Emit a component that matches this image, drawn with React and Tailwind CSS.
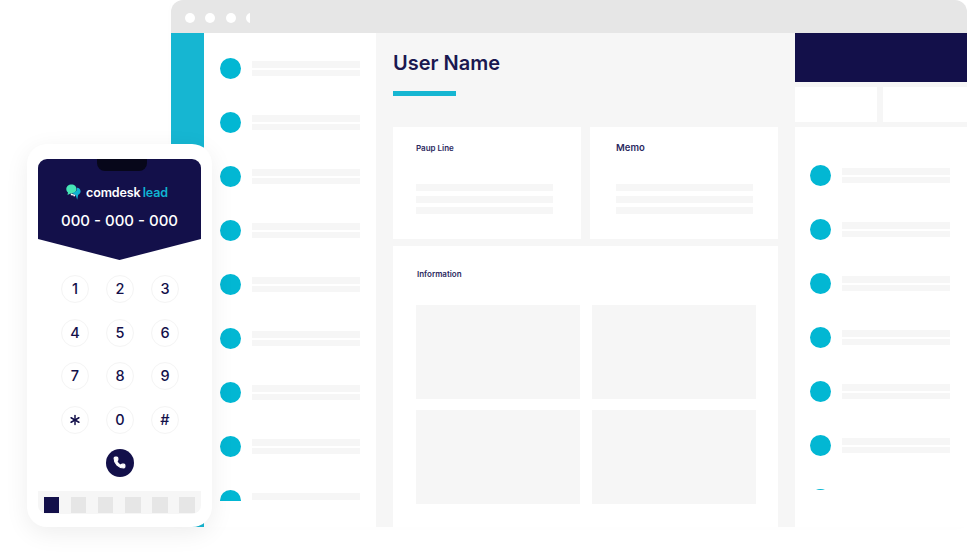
import React from "react";
import { Asterisk, Phone } from "lucide-react";

const KEYS = ["1", "2", "3", "4", "5", "6", "7", "8", "9", "*", "0", "#"];
const LEFT_ROWS = [0, 1, 2, 3, 4, 5, 6, 7, 8];
const RIGHT_ROWS = [0, 1, 2, 3, 4, 5, 6];

function ContactRow() {
  return (
    <div className="h-[54px] shrink-0 flex items-start gap-[11px]">
      <div className="w-[21px] h-[21px] rounded-full bg-[#02b7d3] shrink-0" />
      <div className="w-[108px] pt-[3px] flex flex-col gap-[2px]">
        <div className="h-[6.5px] bg-[#f6f6f6]" />
        <div className="h-[6px] bg-[#f6f6f6]" />
      </div>
    </div>
  );
}

function TextLines() {
  return (
    <div className="w-[137px] flex flex-col gap-[4.5px]">
      <div className="h-[7px] bg-[#f6f6f6]" />
      <div className="h-[7px] bg-[#f6f6f6]" />
      <div className="h-[7px] bg-[#f6f6f6]" />
    </div>
  );
}

function Logo() {
  return (
    <svg width="15" height="17" viewBox="0 0 15 17" className="shrink-0">
      <path d="M5.5 0.5C8.5 0.5 10.5 2.6 10.5 5C10.5 7.6 8.4 9.5 5.5 9.5C5.2 9.5 4.9 9.5 4.6 9.4L1.5 11L2 8.4C0.9 7.6 0.3 6.4 0.3 5C0.3 2.6 2.5 0.5 5.5 0.5Z" fill="#46e5b5" />
      <path d="M11 3.7C13 3.7 14.6 5.3 14.6 7.3C14.6 8.9 13.6 10.2 12.2 10.7L11.2 15.8L9.7 11.2C8 10.8 6.8 9.4 6.8 8.6C9 8.6 11.4 6.8 11 3.7Z" fill="#10b4d3" />
      <path d="M4.8 9.5L9.5 11L8 13L7.5 11.6L4.8 11.2Z" fill="#ffffff" />
    </svg>
  );
}

function PhoneMock() {
  return (
    <div className="absolute left-[27px] top-[144px] w-[185px] h-[383px] bg-white rounded-[20px] shadow-[0_6px_24px_rgba(0,0,0,0.07)] px-[11px] pt-[15px] flex flex-col">
      <div className="relative h-[101px] bg-[#13104a] rounded-t-[9px] [clip-path:polygon(0_0,100%_0,100%_80px,50%_100%,0_80px)] flex flex-col items-center">
        <div className="absolute top-0 left-[59px] w-[50px] h-[12px] bg-[#07071a] rounded-b-[8px]" />
        <div className="mt-[25px] flex items-center gap-[5px] -ml-[5px]">
          <Logo />
          <div className="text-[12.5px] leading-[16px] font-semibold tracking-[-0.1px] text-white">
            comdesk<span className="text-[#10b4d3] ml-[2px]">lead</span>
          </div>
        </div>
        <div className="mt-[10px] text-[15px] leading-[20px] font-medium text-white whitespace-nowrap">000 - 000 - 000</div>
      </div>

      <div className="mt-[15px] px-[23px] grid grid-cols-[28px_28px_28px] gap-x-[17px] gap-y-[15.6px]">
        {KEYS.map((key) => (
          <div key={key} className="w-[28px] h-[28px] rounded-full border border-[#f4f4f4] flex items-center justify-center text-[14.5px] font-medium text-[#13104a]">
            {key === "*" ? <Asterisk size={18} strokeWidth={2} aria-label="*" /> : key}
          </div>
        ))}
      </div>

      <div className="mt-[15px] self-center w-[28px] h-[28px] rounded-full bg-[#13104a] flex items-center justify-center">
        <Phone size={13} strokeWidth={2} className="text-white fill-white" />
      </div>

      <div className="mt-[14px] h-[23.5px] bg-[#f6f6f6] rounded-b-[9px] pl-[6px] pr-[6px] pt-[6px] flex justify-between">
        <div className="w-[15px] h-[16px] bg-[#13104a]" />
        <div className="w-[15.5px] h-[16px] bg-[#e6e6e6]" />
        <div className="w-[15.5px] h-[16px] bg-[#e6e6e6]" />
        <div className="w-[15.5px] h-[16px] bg-[#e6e6e6]" />
        <div className="w-[15.5px] h-[16px] bg-[#e6e6e6]" />
        <div className="w-[15.5px] h-[16px] bg-[#e6e6e6]" />
      </div>
    </div>
  );
}

export default function App() {
  return (
    <div className="relative w-[967px] h-[554px] bg-white overflow-hidden font-['Inter',sans-serif]">
      <div className="ml-[171px] w-[796px] h-[527px] flex flex-col shadow-[0_0_12px_rgba(0,0,0,0.01)]">
        {/* Title bar */}
        <div className="h-[33px] shrink-0 bg-[#e6e6e6] rounded-t-[12px] pl-[14px] pt-[12.5px]">
          <div className="w-[65px] h-[10px] overflow-hidden flex gap-[10.3px]">
            <div className="w-[10px] h-[10px] shrink-0 rounded-full bg-white" />
            <div className="w-[10px] h-[10px] shrink-0 rounded-full bg-white" />
            <div className="w-[10px] h-[10px] shrink-0 rounded-full bg-white" />
            <div className="w-[10px] h-[10px] shrink-0 rounded-full bg-white" />
          </div>
        </div>

        <div className="flex-1 min-h-0 flex">
          <div className="w-[33px] bg-[#16b6d2]" />

          {/* Contact list */}
          <div className="w-[172px] pl-[16px] pt-[25px] bg-white">
            <div className="h-[443px] overflow-hidden">
              {LEFT_ROWS.map((row) => (
                <ContactRow key={row} />
              ))}
            </div>
          </div>

          {/* Detail */}
          <div className="w-[418px] bg-[#f6f6f6] pl-[17px] pr-[16px] flex flex-col">
            <h1 className="mt-[17px] h-[26px] text-[20px] leading-[26px] font-semibold text-[#1a1850]">User Name</h1>
            <div className="mt-[15px] w-[62.5px] h-[5px] bg-[#16b6d2]" />
            <div className="mt-[31px] grid grid-cols-2 gap-x-[9px]">
              <div className="h-[112px] bg-white pl-[23px] pt-[16px]">
                <div className="h-[11px] text-[8px] leading-[11px] font-semibold text-[#2b2960]">Paup Line</div>
                <div className="mt-[30px]">
                  <TextLines />
                </div>
              </div>
              <div className="h-[112px] bg-white pl-[26px] pt-[15px]">
                <div className="h-[12px] text-[9.5px] leading-[12px] font-semibold text-[#2b2960]">Memo</div>
                <div className="mt-[30px]">
                  <TextLines />
                </div>
              </div>
            </div>
            <div className="mt-[7px] flex-1 bg-white pl-[23px] pr-[22px] pt-[23px]">
              <div className="h-[11px] pl-[1px] text-[8px] leading-[11px] font-semibold text-[#2b2960]">Information</div>
              <div className="mt-[25px] grid grid-cols-2 gap-x-[12px] gap-y-[11px]">
                <div className="h-[94px] bg-[#f6f6f6]" />
                <div className="h-[94px] bg-[#f6f6f6]" />
                <div className="h-[94px] bg-[#f6f6f6]" />
                <div className="h-[94px] bg-[#f6f6f6]" />
              </div>
            </div>
          </div>

          {/* Right panel */}
          <div className="flex-1 min-w-0 flex flex-col bg-[#f6f6f6]">
            <div className="h-[49px] ml-[0.5px] bg-[#13104a]" />
            <div className="pl-[1px] pt-[5px] h-[45px] flex gap-[6px]">
              <div className="w-[82px] h-[35px] bg-white" />
              <div className="flex-1 h-[35px] bg-white" />
            </div>
            <div className="flex-1 ml-[1px] bg-white pl-[15px] pt-[38px]">
              <div className="h-[324.5px] overflow-hidden">
                {RIGHT_ROWS.map((row) => (
                  <ContactRow key={row} />
                ))}
              </div>
            </div>
          </div>
        </div>
      </div>

      <PhoneMock />
    </div>
  );
}
